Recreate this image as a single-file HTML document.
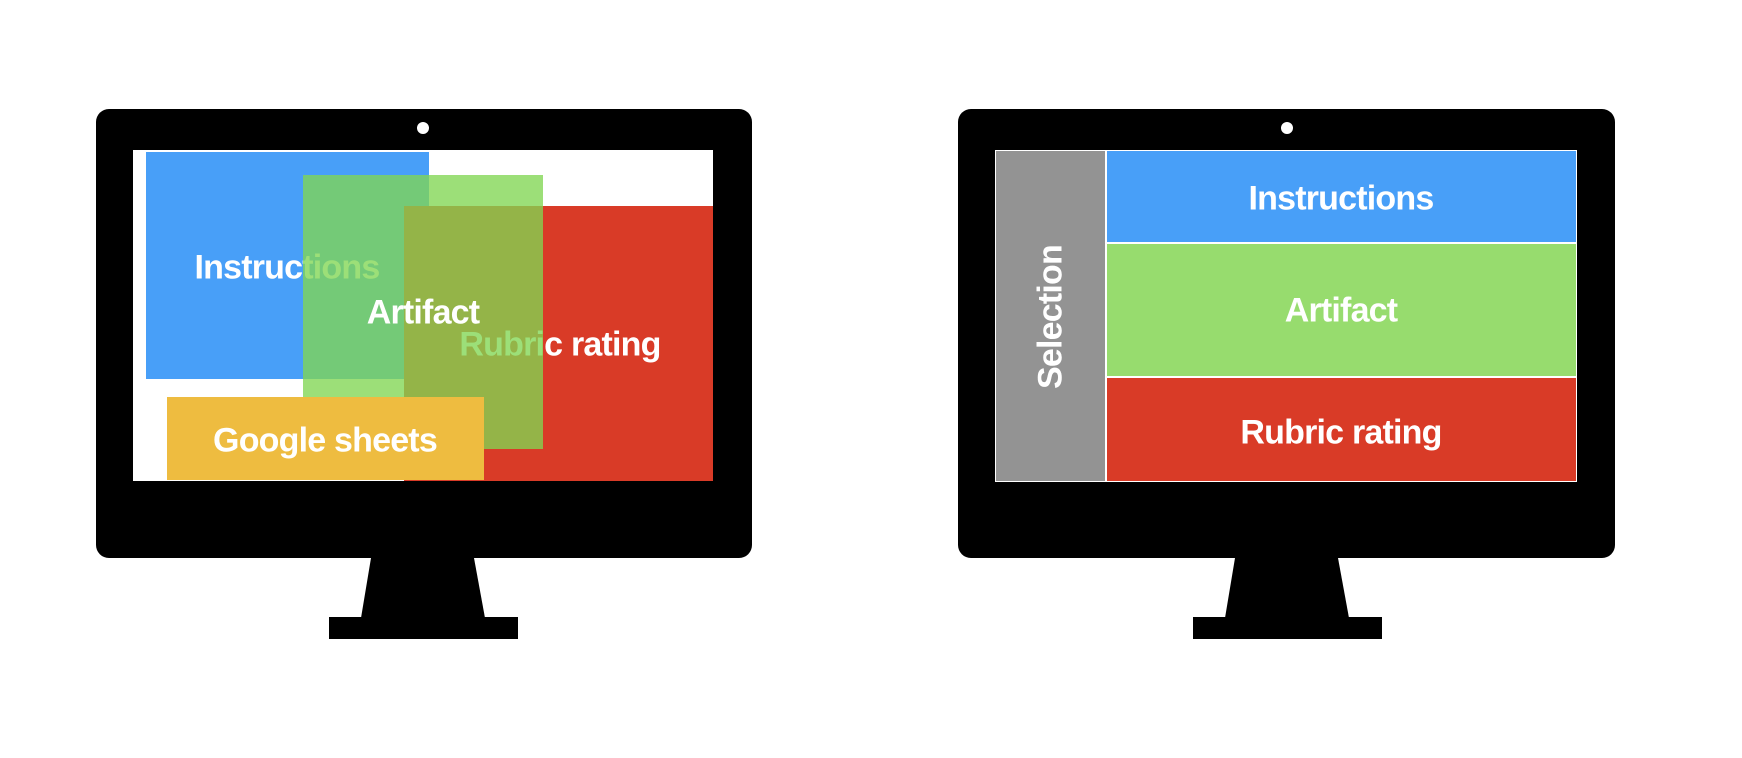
<!DOCTYPE html>
<html><head><style>
body{margin:0;width:1742px;height:758px;background:#fff;position:relative;overflow:hidden;font-family:"Liberation Sans",Arial,sans-serif;}
div{position:absolute;box-sizing:border-box;}
.t{color:#fff;font-weight:bold;font-size:34px;white-space:nowrap;transform:translate(-50%,-50%);letter-spacing:-0.8px;}
.mon{background:#000;border-radius:13px;}
.cam{width:12px;height:12px;border-radius:50%;background:#fff;}
</style></head><body>
<div class="mon" style="left:96px;top:109px;width:656px;height:449px"></div>
<div class="cam" style="left:417px;top:122px"></div>
<svg style="position:absolute;left:0;top:0" width="1742" height="758">
<polygon points="371,558 474,558 485,618 361,618" fill="#000"/>
<rect x="329" y="617" width="189" height="22" fill="#000"/>
<polygon points="1235,558 1338,558 1349,618 1225,618" fill="#000"/>
<rect x="1193" y="617" width="189" height="22" fill="#000"/>
</svg>
<div style="left:133px;top:150px;width:580px;height:331px;background:#fff"></div>
<div style="left:146px;top:152px;width:283px;height:227px;background:#489FF8"></div>
<div class="t" style="left:287px;top:268px">Instructions</div>
<div style="left:404px;top:206px;width:309px;height:275px;background:#D93B27"></div>
<div class="t" style="left:560px;top:345px">Rubric rating</div>
<div style="left:303px;top:175px;width:240px;height:274px;background:rgba(128,214,82,0.78)"></div>
<div class="t" style="left:423px;top:313px">Artifact</div>
<div style="left:167px;top:397px;width:317px;height:83px;background:#EEBC40"></div>
<div class="t" style="left:325px;top:441px">Google sheets</div>
<div class="mon" style="left:958px;top:109px;width:657px;height:449px"></div>
<div class="cam" style="left:1281px;top:122px"></div>
<div style="left:995px;top:150px;width:582px;height:332px;background:#fff"></div>
<div style="left:996px;top:151px;width:109px;height:330px;background:#939393"></div>
<div class="t" style="left:1051px;top:317px;transform:translate(-50%,-50%) rotate(-90deg)">Selection</div>
<div style="left:1107px;top:151px;width:469px;height:91px;background:#489FF8"></div>
<div class="t" style="left:1341px;top:199px">Instructions</div>
<div style="left:1107px;top:244px;width:469px;height:132px;background:#97DC6E"></div>
<div class="t" style="left:1341px;top:311px">Artifact</div>
<div style="left:1107px;top:378px;width:469px;height:103px;background:#D93B27"></div>
<div class="t" style="left:1341px;top:433px">Rubric rating</div>
</body></html>
